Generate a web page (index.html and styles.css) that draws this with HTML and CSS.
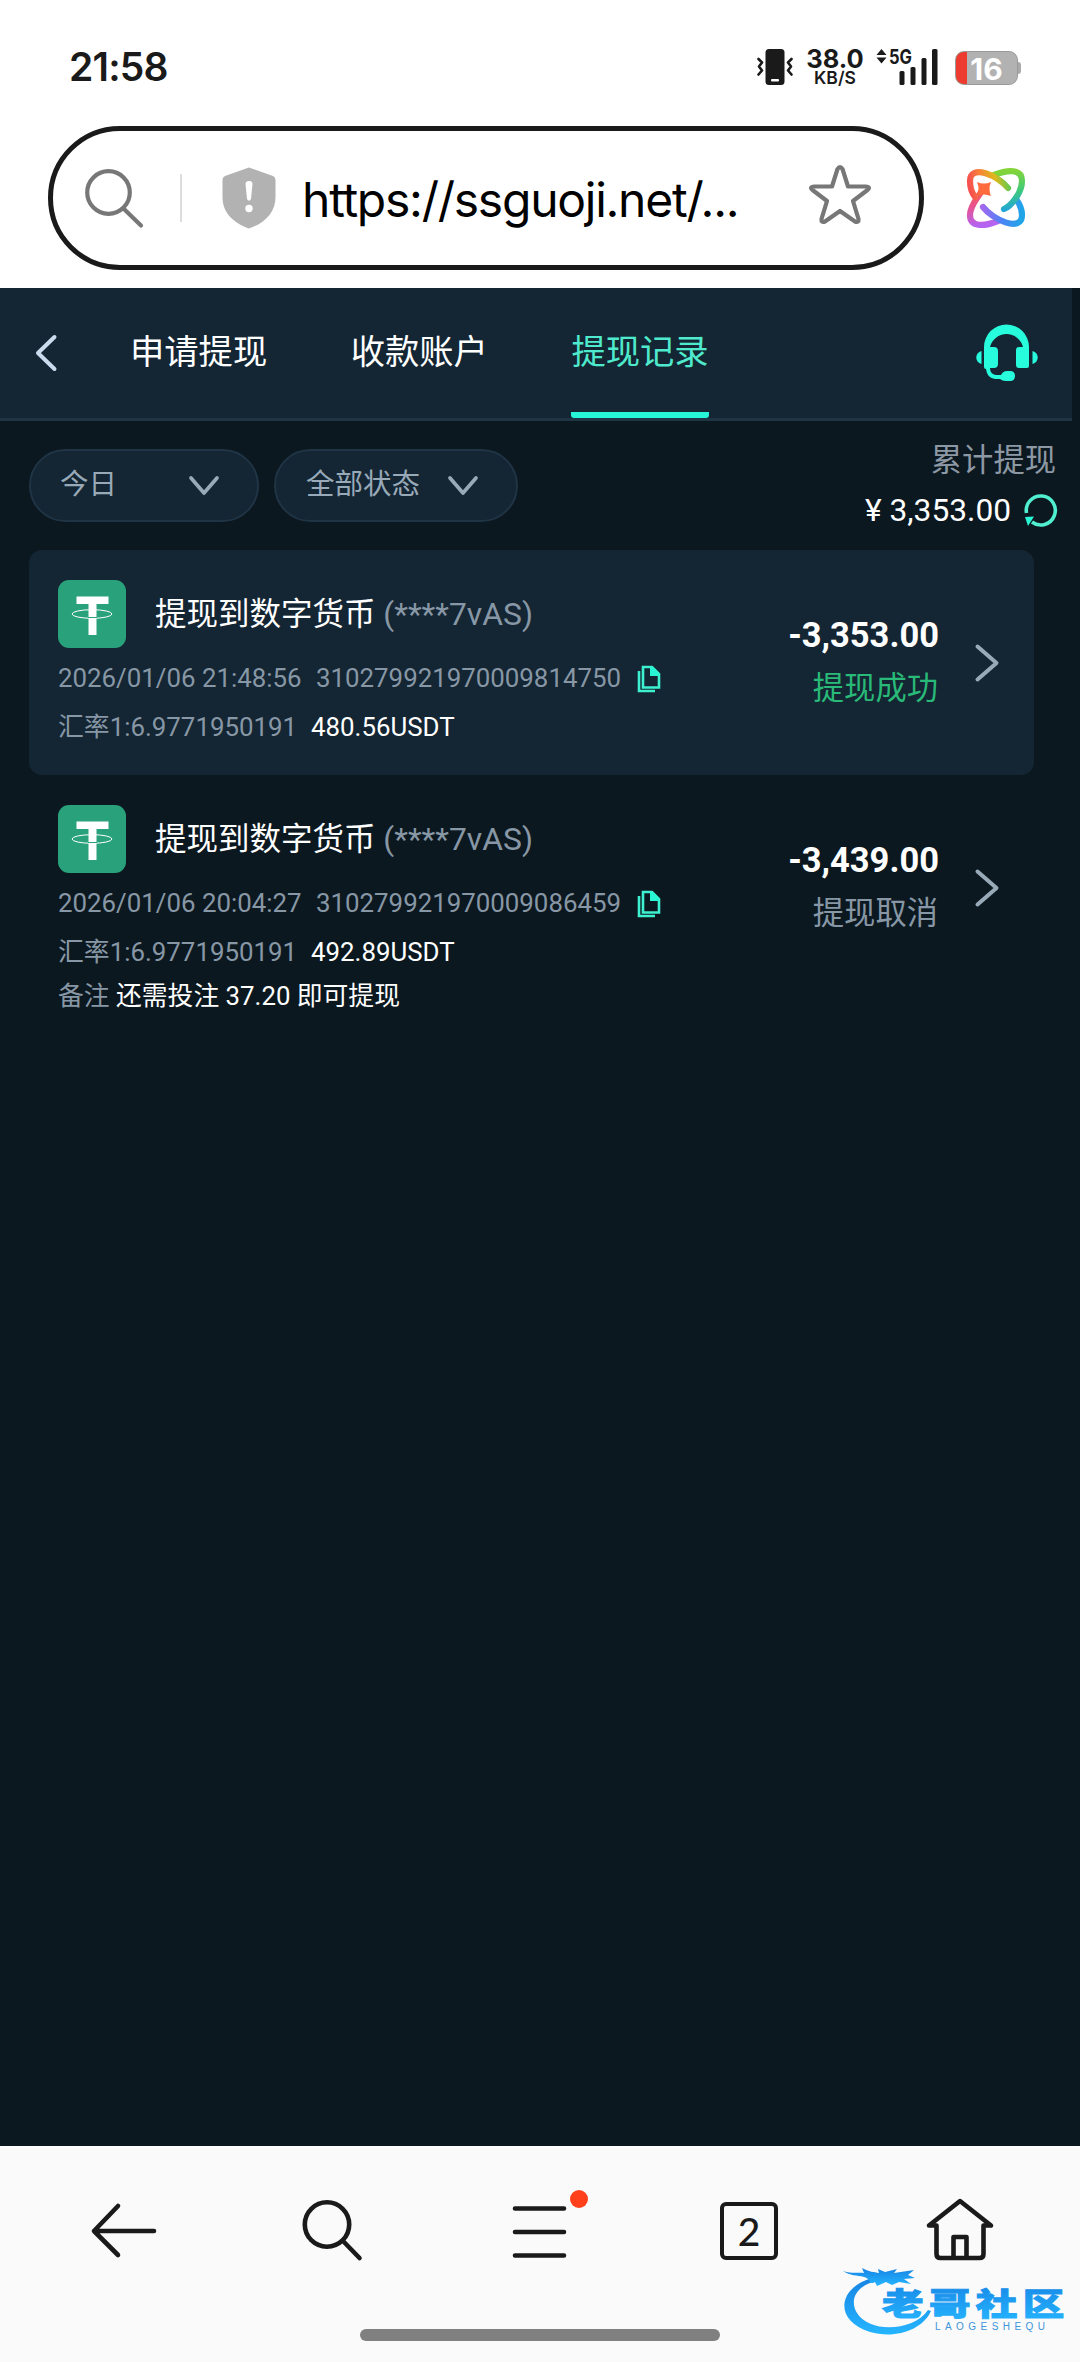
FILE: index.html
```html
<!DOCTYPE html>
<html lang="zh-CN">
<head>
<meta charset="utf-8">
<title>提现记录</title>
<link rel="stylesheet" href="styles.css">
</head>
<body>
<header class="status">
  <time class="clock">21:58</time>
  <div class="indicators">
    <svg class="vibrate" viewBox="0 0 36 36"><rect x="8.500" width="19" height="36" rx="3.500" fill="#1a1a1a"/><rect x="14" y="30" width="8" height="2.500" rx="1" fill="#fff"/><path d="M1.500 10l3.500 3.500-3 4 3 4-3.500 4M34.500 10 31 13.500l3 4-3 4 3.500 4" fill="none" stroke="#1a1a1a" stroke-width="2.600" stroke-linecap="round" stroke-linejoin="round"/></svg>
    <div class="speed"><b>38.0</b><span>KB/S</span></div>
    <div class="signal">
      <svg viewBox="0 0 62 36"><g fill="#1a1a1a"><path d="M.500 6 5.500 0l5 6zM.500 8.500h10l-5 6z"/><rect x="23.500" y="22" width="5" height="14" rx="1.500"/><rect x="34.500" y="18" width="5" height="18" rx="1.500"/><rect x="45.500" y="9" width="5" height="27" rx="1.500"/><rect x="56" width="5.500" height="36" rx="1.500"/><text class="net" x="13" y="14.500" textLength="23" lengthAdjust="spacingAndGlyphs">5G</text></g></svg>
    </div>
    <div class="battery"><span>16</span></div>
  </div>
</header>
<div class="browser-bar">
  <div class="address">
    <svg class="i-search" viewBox="0 0 58 58"><circle cx="23.500" cy="23.500" r="21.300"/><path d="M39 40l17 16.500"/></svg>
    <i class="divider"></i>
    <svg class="i-shield" viewBox="0 0 54 62"><path d="M27 .500 51 9q2.500 1 2.500 4v17c0 16-11 26-26.500 31.500C11.500 56 .500 46 .500 30V13q0-3 2.500-4z" fill="#b2b2b2"/><path d="M23.500 17q0-3 3.500-3t3.500 3l-1.500 15q-2 3.500-4 0z" fill="#fff"/><circle cx="27" cy="41.500" r="3.700" fill="#fff"/></svg>
    <span class="url">https://ssguoji.net/...</span>
    <svg class="i-star" viewBox="0 0 62 60"><path d="M28.500 4q2.500-4 5 0L39 21.500h18q5 .500 1.500 3.500L44 36l5.500 18q.500 4-3.500 2.500L31 46 16 56.500q-4 1.500-3.500-2.500L18 36 3.500 25Q0 22 5 21.500h18z"/></svg>
  </div>
  <svg class="i-ai" viewBox="0 0 58 58">
    <defs>
      <linearGradient id="orange-green" gradientUnits="userSpaceOnUse" x1="3" y1="20" x2="43" y2="12"><stop offset="0" stop-color="#f65050"/><stop offset=".3" stop-color="#f8813a"/><stop offset=".65" stop-color="#dfb91c"/><stop offset="1" stop-color="#55cc55"/></linearGradient>
      <linearGradient id="green-blue" gradientUnits="userSpaceOnUse" x1="38" y1="3" x2="42" y2="41"><stop offset="0" stop-color="#83d43a"/><stop offset=".5" stop-color="#3fcb78"/><stop offset="1" stop-color="#22a6d8"/></linearGradient>
      <linearGradient id="violet-blue" gradientUnits="userSpaceOnUse" x1="15" y1="40" x2="55" y2="44"><stop offset="0" stop-color="#a368ee"/><stop offset=".5" stop-color="#4e82f5"/><stop offset="1" stop-color="#20a5e8"/></linearGradient>
      <linearGradient id="red-violet" gradientUnits="userSpaceOnUse" x1="12" y1="20" x2="18" y2="55"><stop offset="0" stop-color="#fa5a48"/><stop offset=".5" stop-color="#e55298"/><stop offset="1" stop-color="#b464f0"/></linearGradient>
    </defs>
    <g fill="none" stroke-width="6.200" stroke-linecap="round"><path d="M31 52C16 58 3 58 3 46 3 37 10 30 14 23" stroke="url(#red-violet)"/><path d="M16 38C26 51 55 64 55 46 55 40 52 34 49 30" stroke="url(#violet-blue)"/><path d="M27 6C42 0 55 0 55 12 55 24 44 37 37 40" stroke="url(#green-blue)"/><path d="M41 19C32 7 3-6 3 12 3 19 5 24 8 28" stroke="url(#orange-green)"/></g>
    <path d="M10 13q7 3 14 0-3 7 0 14-7-3-14 0 3-7 0-14z" fill="#ff6b3d"/>
  </svg>
</div>
<main class="app">
  <nav class="tabs">
    <svg class="back" viewBox="0 0 22 38"><path d="M19.500 3 3 19l16.500 16"/></svg>
    <a>申请提现</a><a>收款账户</a><a class="active">提现记录</a>
    <svg class="headset" viewBox="0 0 62 56"><path d="M8 22a22.500 22.500 0 0 1 45 0v19q0 2-2 2h-8q-3 0-3-3V25q0-3 3-3h4a17 17 0 0 0-33 0h4q4 0 4 4v13q0 4-4 4h-4q0 6 6 7h5q2-4 6-4h3q5 0 5 5t-5 5h-4q-4 0-6-2h-5q-8-1-9-10-2 0-2-2z"/><path d="M5.500 26v13C-1.500 37-1.500 28 5.500 26zM56.500 26v13c7-2 7-11 0-13z"/></svg>
  </nav>
  <section class="filters">
    <button class="pill day"><span>今日</span><svg viewBox="0 0 30 20"><path d="M2 2l13 15L28 2"/></svg></button>
    <button class="pill state"><span>全部状态</span><svg viewBox="0 0 30 20"><path d="M2 2l13 15L28 2"/></svg></button>
    <div class="total"><span>累计提现</span><strong>¥ 3,353.00<svg viewBox="0 0 34 32"><path d="M2.500 18A14.500 14.500 0 1 1 8 27" fill="none" stroke="#4fefd0" stroke-width="3.600"/><path d="M1 22l9-.500L4 31z" fill="#27f5d3"/></svg></strong></div>
  </section>
  <article class="record highlighted">
    <div class="detail">
      <h2><svg class="coin" viewBox="0 0 68 68"><rect width="68" height="68" rx="11" fill="#29a17b"/><path d="M18.500 16.500h32V24h-12v31h-8V24h-12z" fill="#fff"/><ellipse cx="34" cy="34" rx="20" ry="4.300" fill="none" stroke="#fff"/><path d="M30 37.500h9" stroke="#29a17b"/></svg><span class="title">提现到数字货币 <em>(****7vAS)</em></span></h2>
      <p class="meta"><span class="when">2026/01/06 21:48:56</span><span class="order">310279921970009814750</span><svg class="copy" viewBox="0 0 23 28"><path d="M6 2h9l7 7v13.500H6zM2 6v20h16" fill="none" stroke="#3df0d0" stroke-width="2.600"/><path d="M13 2h3l6 6v3h-9z" fill="#27f5d3"/></svg></p>
      <p class="rate"><span>汇率1:6.9771950191</span><b>480.56USDT</b></p>
    </div>
    <div class="amount"><strong>-3,353.00</strong><span class="ok">提现成功</span></div>
    <svg class="go" viewBox="0 0 24 38"><path d="M2.500 2.500 21.500 19 2.500 35.500"/></svg>
  </article>
  <article class="record">
    <div class="detail">
      <h2><svg class="coin" viewBox="0 0 68 68"><rect width="68" height="68" rx="11" fill="#29a17b"/><path d="M18.500 16.500h32V24h-12v31h-8V24h-12z" fill="#fff"/><ellipse cx="34" cy="34" rx="20" ry="4.300" fill="none" stroke="#fff"/><path d="M30 37.500h9" stroke="#29a17b"/></svg><span class="title">提现到数字货币 <em>(****7vAS)</em></span></h2>
      <p class="meta"><span class="when">2026/01/06 20:04:27</span><span class="order">310279921970009086459</span><svg class="copy" viewBox="0 0 23 28"><path d="M6 2h9l7 7v13.500H6zM2 6v20h16" fill="none" stroke="#3df0d0" stroke-width="2.600"/><path d="M13 2h3l6 6v3h-9z" fill="#27f5d3"/></svg></p>
      <p class="rate"><span>汇率1:6.9771950191</span><b>492.89USDT</b></p>
      <p class="note">备注 <b>还需投注 37.20 即可提现</b></p>
    </div>
    <div class="amount"><strong>-3,439.00</strong><span>提现取消</span></div>
    <svg class="go" viewBox="0 0 24 38"><path d="M2.500 2.500 21.500 19 2.500 35.500"/></svg>
  </article>
</main>
<footer class="toolbar">
  <div class="actions">
    <svg viewBox="0 0 68 68"><path d="M30 9 6 34l24 24M6 34h60"/></svg>
    <svg viewBox="0 0 68 68"><circle cx="30" cy="27.500" r="22.200"/><path d="M46.500 44.500l16 16.500"/></svg>
    <div class="menu"><svg viewBox="0 0 68 68"><path d="M9 11.500h49M9 35h49M9 58.500h49"/></svg><i class="dot"></i></div>
    <div class="count"><span>2</span></div>
    <svg viewBox="0 0 68 68"><path d="M36 4 67 28.500h-7.500V57q0 4-4 4h-39q-4 0-4-4V28.500H5zM29.500 61V40h13v21"/></svg>
  </div>
  <i class="home-bar"></i>
</footer>
<div class="watermark">
  <svg viewBox="0 0 225 72">
    <defs><linearGradient id="wm" x1="0" y1="0" x2="0" y2="1"><stop offset="0" stop-color="#1684e4"/><stop offset="1" stop-color="#25b5ff"/></linearGradient></defs>
    <path d="M30 12C-5 22-8 55 28 66c24 7 52-1 61-21l-3-1C72 65 28 68 15 47 6 32 17 18 36 15z" fill="url(#wm)"/>
    <path d="M1 5c10 3 14 1 21 2l-2-5c7 4 12 4 17 5l-1-4 7 3 12-3-3 4 20-3-6 5 7 3-11 1 7 5-12-2-7 3-6-3-9 4-2-4C28 20 28 12 22 11 15 9 8 10 1 5z" fill="url(#wm)"/>
    <text class="wm-cn" transform="translate(40 48.500) scale(1.34 1)" fill="url(#wm)" stroke="url(#wm)">老哥社区</text>
    <text class="wm-en" x="93" y="63.500" textLength="110">LAOGESHEQU</text>
  </svg>
</div>
</body>
</html>
```
FILE: styles.css
```css
* { box-sizing: border-box; }
body { margin: 0; width: 1080px; height: 2362px; position: relative; display: flex; flex-direction: column; background: #fff; font-family: Roboto, "Noto Sans CJK SC", sans-serif; }
svg { display: block; flex: none; overflow: visible; }
h2, p { margin: 0; font-weight: 400; }
em { font-style: normal; }

.status { height: 126px; padding: 49px 59px 0 69px; display: flex; justify-content: space-between; font-family: Inter, sans-serif; color: #1a1a1a; }
.clock { font-size: 39px; font-weight: 600; line-height: 36px; letter-spacing: -.8px; }
.indicators { display: flex; height: 36px; }
.vibrate { width: 36px; height: 36px; margin-right: 14px; }
.speed { width: 56px; display: flex; flex-direction: column; align-items: center; margin-right: 13px; }
.speed b { font-size: 25.500px; font-weight: 700; line-height: 20px; }
.speed span { font-size: 17.500px; font-weight: 600; line-height: 17px; }
.signal svg { width: 62px; height: 36px; }
.signal { margin-right: 17px; }
.net { font-size: 20px; font-weight: 700; }
.battery { width: 63px; height: 34px; margin: 2px 3px 0 0; border: 1px solid #999; border-radius: 9px; background: linear-gradient(90deg, #ed3b2f 11px, #b2b2b2 11px); position: relative; text-align: center; color: #fff; font-weight: 700; font-size: 30px; line-height: 34px; }
.battery::after { content: ""; position: absolute; left: 62px; top: 10px; width: 3px; height: 12px; border-radius: 0 3px 3px 0; background: #aaa; }

.browser-bar { height: 162px; padding: 0 55px 0 48px; display: flex; align-items: flex-start; justify-content: space-between; }
.address { width: 876px; height: 144px; border: 5px solid #1a1a1a; border-radius: 72px; padding: 0 48px 0 32px; display: flex; align-items: center; }
.i-search, .i-star { fill: none; stroke: #777; stroke-width: 4.200px; stroke-linecap: round; stroke-linejoin: round; }
.i-search { width: 58px; height: 58px; }
.divider { width: 2px; height: 48px; background: #ddd; margin: 0 40px 0 37px; }
.i-shield { width: 54px; height: 62px; }
.url { flex: 1; margin-left: 26px; padding-top: 3px; font: 400 48px/60px Inter, sans-serif; letter-spacing: -1.250px; color: #000; white-space: nowrap; }
.i-star { width: 62px; height: 60px; margin-bottom: 6px; }
.i-ai { width: 58px; height: 58px; margin-top: 43px; }

.app { height: 1858px; background: #0c1820; color: #fff; }
.tabs { width: 1072px; height: 133px; background: #142533; border-bottom: 3px solid #1f3444; padding: 0 34px 0 35px; display: flex; align-items: center; }
.tabs a { height: 130px; line-height: 128px; font-size: 34.300px; margin-right: 83.500px; }
.back { width: 22px; height: 38px; margin-right: 73px; fill: none; stroke: #c9dcee; stroke-width: 4px; stroke-linecap: round; stroke-linejoin: round; }
.tabs .active { color: #4feacd; border-bottom: 6px solid #27f5d8; border-radius: 3px; margin-right: auto; }
.headset { width: 62px; height: 56px; fill: #27fcdc; }

.filters { height: 129px; padding: 28px 22px 0 29px; display: flex; align-items: flex-start; }
.pill { height: 73px; border: 2px solid #1f3444; border-radius: 37px; background: #142533; color: #98a9b8; display: flex; justify-content: space-between; align-items: center; padding: 0 38px 1px 29px; font: 28.500px/40px Roboto, "Noto Sans CJK SC", sans-serif; }
.pill svg { width: 30px; height: 20px; margin-top: 1px; fill: none; stroke: #98a9b8; stroke-width: 3.700px; stroke-linecap: round; stroke-linejoin: round; }
.day { width: 230px; margin-right: 15px; }
.state { width: 244px; }
.state.pill { padding-left: 30px; }
.total { margin-left: auto; display: flex; flex-direction: column; align-items: flex-end; font-size: 31.300px; color: #8d98a5; line-height: 46px; margin-top: -11px; }
.total span { margin-right: 2px; }
.total strong { color: #fff; font-weight: 400; font-size: 31.700px; display: flex; align-items: center; line-height: 50px; margin-top: 2px; }
.total svg { width: 34px; height: 32px; margin-left: 13px; }

.record { width: 1005px; height: 225px; margin-left: 29px; padding: 30px 35px 0 29px; display: flex; }
.highlighted { background: #142533; border-radius: 13px; }
.detail { flex: 1; color: #8797a5; }
.record h2 { display: flex; align-items: center; height: 67px; font-size: 31.500px; color: #fff; white-space: pre; }
.title { padding-bottom: 6px; }
.record em { color: #8797a5; font-size: 31.800px; }
.coin { width: 68px; height: 68px; margin-right: 29px; }
.meta, .rate, .note { display: flex; font-size: 25.850px; white-space: pre; }
.meta { height: 34px; margin-top: 14px; align-items: center; }
.rate { height: 40px; margin-top: 13px; line-height: 38px; align-items: baseline; }
.note { height: 40px; margin-top: 4px; line-height: 38px; align-items: baseline; font-size: 25.800px; }
.when { width: 258px; }
.copy { width: 23px; height: 28px; margin: 2px 0 0 16px; }
.rate span { width: 253px; }
.record b { font-weight: 400; color: #fff; }
.amount { display: flex; flex-direction: column; align-items: flex-end; margin-right: 36px; padding-top: 33px; color: #8797a5; font-size: 31.300px; line-height: 46px; }
.amount strong { color: #fff; font-size: 34.500px; line-height: 44px; margin-bottom: 9px; }
.amount span { margin-right: 1px; }
.amount .ok { color: #29b978; }
.go { width: 24px; height: 38px; margin-top: 64px; fill: none; stroke: #98a9b8; stroke-width: 4px; stroke-linecap: round; stroke-linejoin: round; }

.toolbar { height: 216px; background: #fafafa; border-top: 2px solid #fff; display: flex; flex-direction: column; align-items: center; }
.actions { width: 904px; margin: 49px 0 64px; height: 68px; display: flex; justify-content: space-between; }
.actions svg { width: 68px; height: 68px; fill: none; stroke: #1a1a1a; stroke-width: 4.600px; stroke-linecap: round; stroke-linejoin: round; }
.menu { position: relative; }
.dot { position: absolute; width: 18px; height: 18px; left: 64px; top: -7px; border-radius: 50%; background: #ff401a; }
.count { width: 58px; height: 58px; margin: 5px 5px 0; border: 4px solid #1a1a1a; border-radius: 6px; font: 500 39px/51px Lato, sans-serif; color: #1a1a1a; text-align: center; }
.home-bar { width: 360px; height: 12px; border-radius: 6px; background: #808080; }
.watermark { position: absolute; left: 842px; top: 2266px; }
.watermark svg { width: 225px; height: 72px; }
.wm-cn { font: 900 31px "Noto Sans CJK SC", sans-serif; letter-spacing: 4px; stroke-width: 1px; }
.wm-en { font: 10px "Liberation Sans", sans-serif; fill: #3d95dc; }
```
